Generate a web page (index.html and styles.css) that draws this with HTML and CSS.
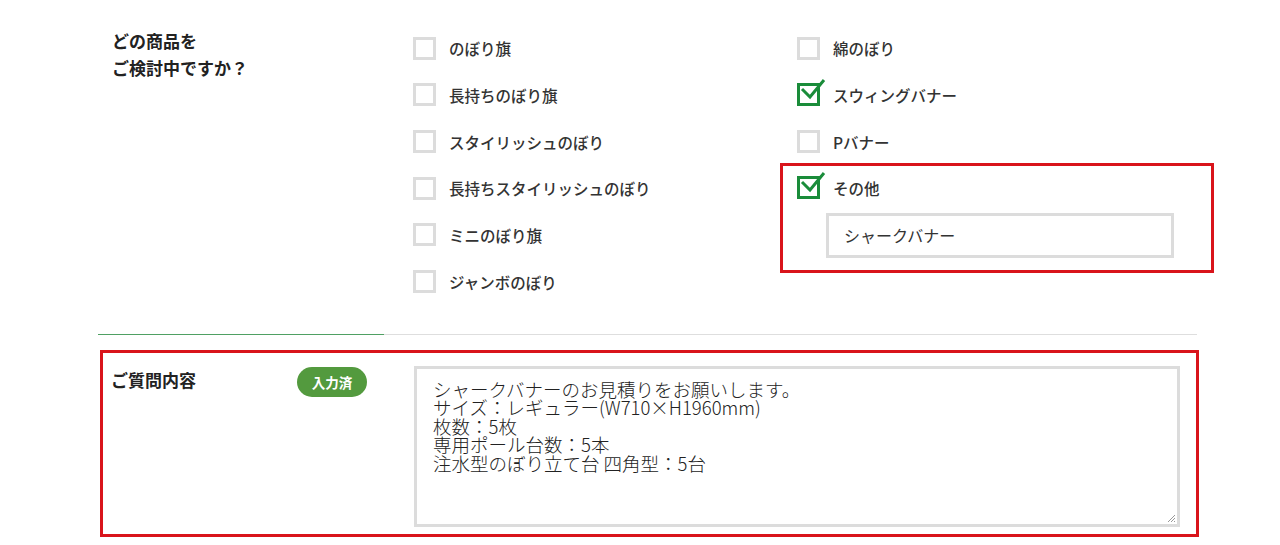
FILE: index.html
```html
<!DOCTYPE html>
<html lang="ja">
<head>
    <meta charset="UTF-8">
    <meta name="viewport" content="width=device-width, initial-scale=1.0">
    <title>お見積りフォーム</title>
    <link rel="stylesheet" href="styles.css">
</head>
<body>
    <div class="form">
        <!-- 商品選択 -->
        <div class="row row-products">
            <div class="row-label">どの商品を<br>ご検討中ですか？</div>
            <div class="options">
                <div class="option-col">
                    <label class="option"><span class="box"></span>のぼり旗</label>
                    <label class="option"><span class="box"></span>長持ちのぼり旗</label>
                    <label class="option"><span class="box"></span>スタイリッシュのぼり</label>
                    <label class="option"><span class="box"></span>長持ちスタイリッシュのぼり</label>
                    <label class="option"><span class="box"></span>ミニのぼり旗</label>
                    <label class="option"><span class="box"></span>ジャンボのぼり</label>
                </div>
                <div class="option-col">
                    <label class="option"><span class="box"></span>綿のぼり</label>
                    <label class="option"><span class="box checked"><svg class="tick" viewBox="0 0 30 30"><path d="M5 12 L13 20 L27 3"/></svg></span>スウィングバナー</label>
                    <label class="option"><span class="box"></span>Pバナー</label>
                    <div class="highlight other">
                        <label class="option option-other"><span class="box checked"><svg class="tick" viewBox="0 0 30 30"><path d="M5 12 L13 20 L27 3"/></svg></span>その他</label>
                        <div class="text-input">シャークバナー</div>
                    </div>
                </div>
            </div>
        </div>

        <div class="divider"><span class="divider-done"></span><span class="divider-rest"></span></div>

        <!-- ご質問内容 -->
        <div class="highlight row-question">
            <div class="row-label">ご質問内容</div>
            <div><span class="badge">入力済</span></div>
            <div class="textarea">シャークバナーのお見積りをお願いします。
サイズ：レギュラー(W710×H1960mm)
枚数：5枚
専用ポール台数：5本
注水型のぼり立て台 四角型：5台<svg class="grip" viewBox="0 0 10 10"><path d="M9 2 L2 9 M9 5 L5 9 M9 8 L8 9"/></svg></div>
        </div>
    </div>
</body>
</html>
```

FILE: styles.css
```css
/* Reset and fonts */
* {
    margin: 0;
    padding: 0;
    box-sizing: border-box;
}
body {
    font-family: "Noto Sans CJK JP", "Noto Sans", sans-serif;
    background-color: #fff;
    color: #333;
}

.form {
    width: 1099px;
    margin-left: 98px;
}

/* Row label */
.row-label {
    font-size: 17px;
    font-weight: bold;
    line-height: 27px;
    color: #222;
}

/* Product row */
.row-products {
    display: grid;
    grid-template-columns: 315px 1fr;
    padding: 25px 0 29px;
}
.row-products .row-label {
    padding: 2px 0 0 14px;
}
.options {
    display: grid;
    grid-template-columns: 384px 400px;
}
.option {
    display: flex;
    align-items: center;
    height: 46.67px;
    font-size: 15.5px;
    font-weight: 500;
    color: #333;
}

/* Checkbox */
.box {
    position: relative;
    flex: none;
    width: 23px;
    height: 23px;
    margin-right: 13px;
    border: 3px solid #dcdcdc;
}
.box.checked {
    border-color: #1a8c3a;
}
.tick {
    position: absolute;
    left: -3px;
    top: -9px;
    width: 30px;
    height: 30px;
    overflow: visible;
}
.tick path {
    fill: none;
    stroke: #1a8c3a;
    stroke-width: 3;
}

/* Red highlight */
.highlight {
    border: 3px solid #d9141b;
}
.other {
    margin: -2px -17px 0;
    padding: 0 0 12px 14px;
}
.option-other {
    height: 44px;
}
.text-input {
    width: 348px;
    height: 45px;
    margin: 3px 0 0 29px;
    padding: 0 15px;
    border: 3px solid #dcdcdc;
    font-size: 16px;
    line-height: 39px;
    color: #333;
}

/* Divider */
.divider {
    display: flex;
    height: 1px;
}
.divider-done {
    width: 286px;
    background-color: #4fa063;
}
.divider-rest {
    flex: 1;
    background-color: #dedede;
}

/* Question row */
.row-question {
    display: grid;
    grid-template-columns: 186px 117px 1fr;
    margin: 15px -2px 0 2px;
    padding: 13px 16px 7px 8px;
}
.badge {
    display: inline-block;
    width: 70px;
    height: 30px;
    margin-top: 1px;
    border-radius: 15px;
    background-color: #539a3e;
    color: #fff;
    font-size: 13.5px;
    font-weight: bold;
    line-height: 30px;
    text-align: center;
}
.textarea {
    position: relative;
    height: 161px;
    padding: 11px 16px;
    border: 3px solid #dcdcdc;
    font-size: 18.5px;
    font-weight: 300;
    line-height: 18.5px;
    color: #222;
    white-space: pre-wrap;
}
.grip {
    position: absolute;
    right: 1px;
    bottom: 1px;
    width: 10px;
    height: 10px;
}
.grip path {
    stroke: #999;
    stroke-width: 1;
}
```
